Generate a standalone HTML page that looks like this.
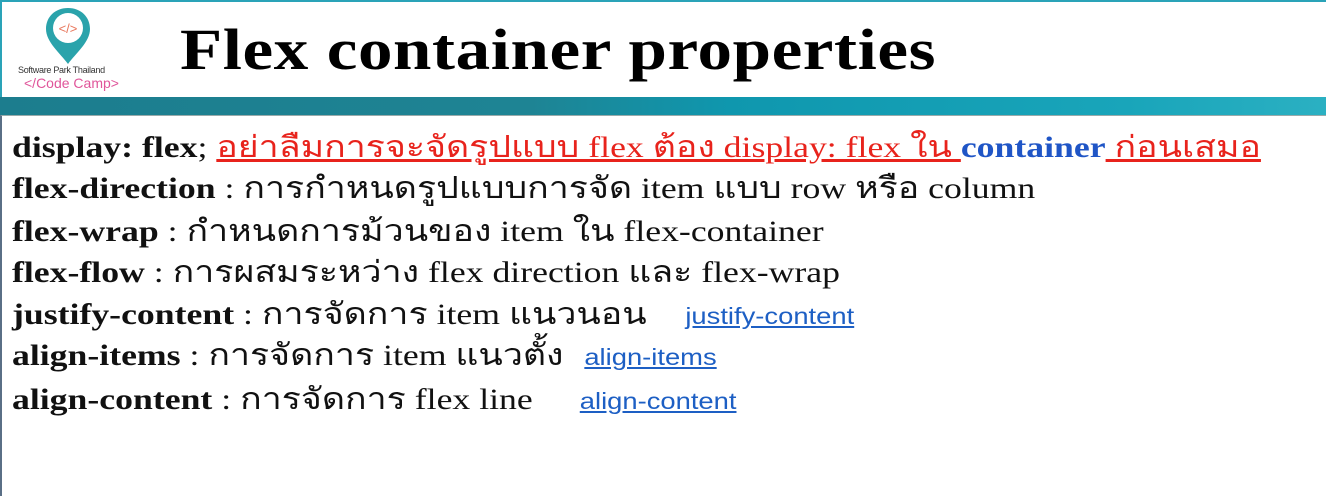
<!DOCTYPE html>
<html><head><meta charset="utf-8"><style>
body{margin:0;width:1326px;height:496px;overflow:hidden;background:#fff;position:relative;font-family:"Liberation Serif",serif}
.top{position:absolute;left:0;top:0;width:1326px;height:97px;background:#fff;border-top:2px solid #2aa3b8;border-left:2px solid #2aa3b8;box-sizing:border-box}
.band{position:absolute;left:0;top:97px;width:1326px;height:18px;background:linear-gradient(90deg,#1c7d8e 0%,#1e8494 40%,#0f97ae 55%,#19a5ba 85%,#2bb0c2 100%)}
.content{position:absolute;left:0;top:115px;width:1326px;height:381px;border-left:2px solid #5a6f86;border-top:1px solid #9aa;box-sizing:border-box}
.title{position:absolute;left:178px;top:14px;font-size:58px;font-weight:bold;color:#000;white-space:nowrap;letter-spacing:0.5px;transform:scaleX(1.19);transform-origin:left}
.ln{position:absolute;left:12px;font-size:30px;line-height:34px;white-space:nowrap;color:#111;transform:scaleX(1.19);transform-origin:left}
.ln b{font-weight:bold}
.red{color:#e8231c;text-decoration:underline}
.blue{color:#1f55c6;font-weight:bold}
a{font-family:"Liberation Sans",sans-serif;font-size:23px;color:#1d5fc4;text-decoration:underline;margin-left:10px}
</style></head><body>
<div class="top">
<svg style="position:absolute;left:40px;top:4px" width="52" height="60" viewBox="0 0 52 60">
<path d="M26 2C13 2 4 11 4 23C4 36 18 47 26 58C34 47 48 36 48 23C48 11 39 2 26 2Z" fill="#2aa3ab"/>
<circle cx="26" cy="22" r="15" fill="#fff"/>
<text x="26" y="27" font-size="13" font-family="Liberation Sans" text-anchor="middle" fill="#e8755a">&lt;/&gt;</text>
</svg>
<div style="position:absolute;left:16px;top:63px;font-family:'Liberation Sans',sans-serif;font-size:9px;color:#333;letter-spacing:-0.3px">Software Park Thailand</div>
<div style="position:absolute;left:22px;top:73px;font-family:'Liberation Sans',sans-serif;font-size:14px;color:#e0559a">&lt;/Code Camp&gt;</div>
<div class="title">Flex container properties</div>
</div>
<div class="band"></div>
<div class="content"></div>
<div class="ln" style="top:131px"><b>display: flex</b>; <span class="red">อย่าลืมการจะจัดรูปแบบ flex ต้อง display: flex ใน </span><span class="blue">container</span><span class="red"> ก่อนเสมอ</span></div>
<div class="ln" style="top:172px"><b>flex-direction</b> : การกำหนดรูปแบบการจัด item แบบ row หรือ column</div>
<div class="ln" style="top:215px"><b>flex-wrap</b> : กำหนดการม้วนของ item ใน flex-container</div>
<div class="ln" style="top:256px"><b>flex-flow</b> : การผสมระหว่าง flex direction และ flex-wrap</div>
<div class="ln" style="top:298px"><b>justify-content</b> : การจัดการ item แนวนอน &nbsp;&nbsp;<a>justify-content</a></div>
<div class="ln" style="top:339px"><b>align-items</b> : การจัดการ item แนวตั้ง <a>align-items</a></div>
<div class="ln" style="top:383px"><b>align-content</b> : การจัดการ flex line <a style="margin-left:32px">align-content</a></div>
</body></html>
